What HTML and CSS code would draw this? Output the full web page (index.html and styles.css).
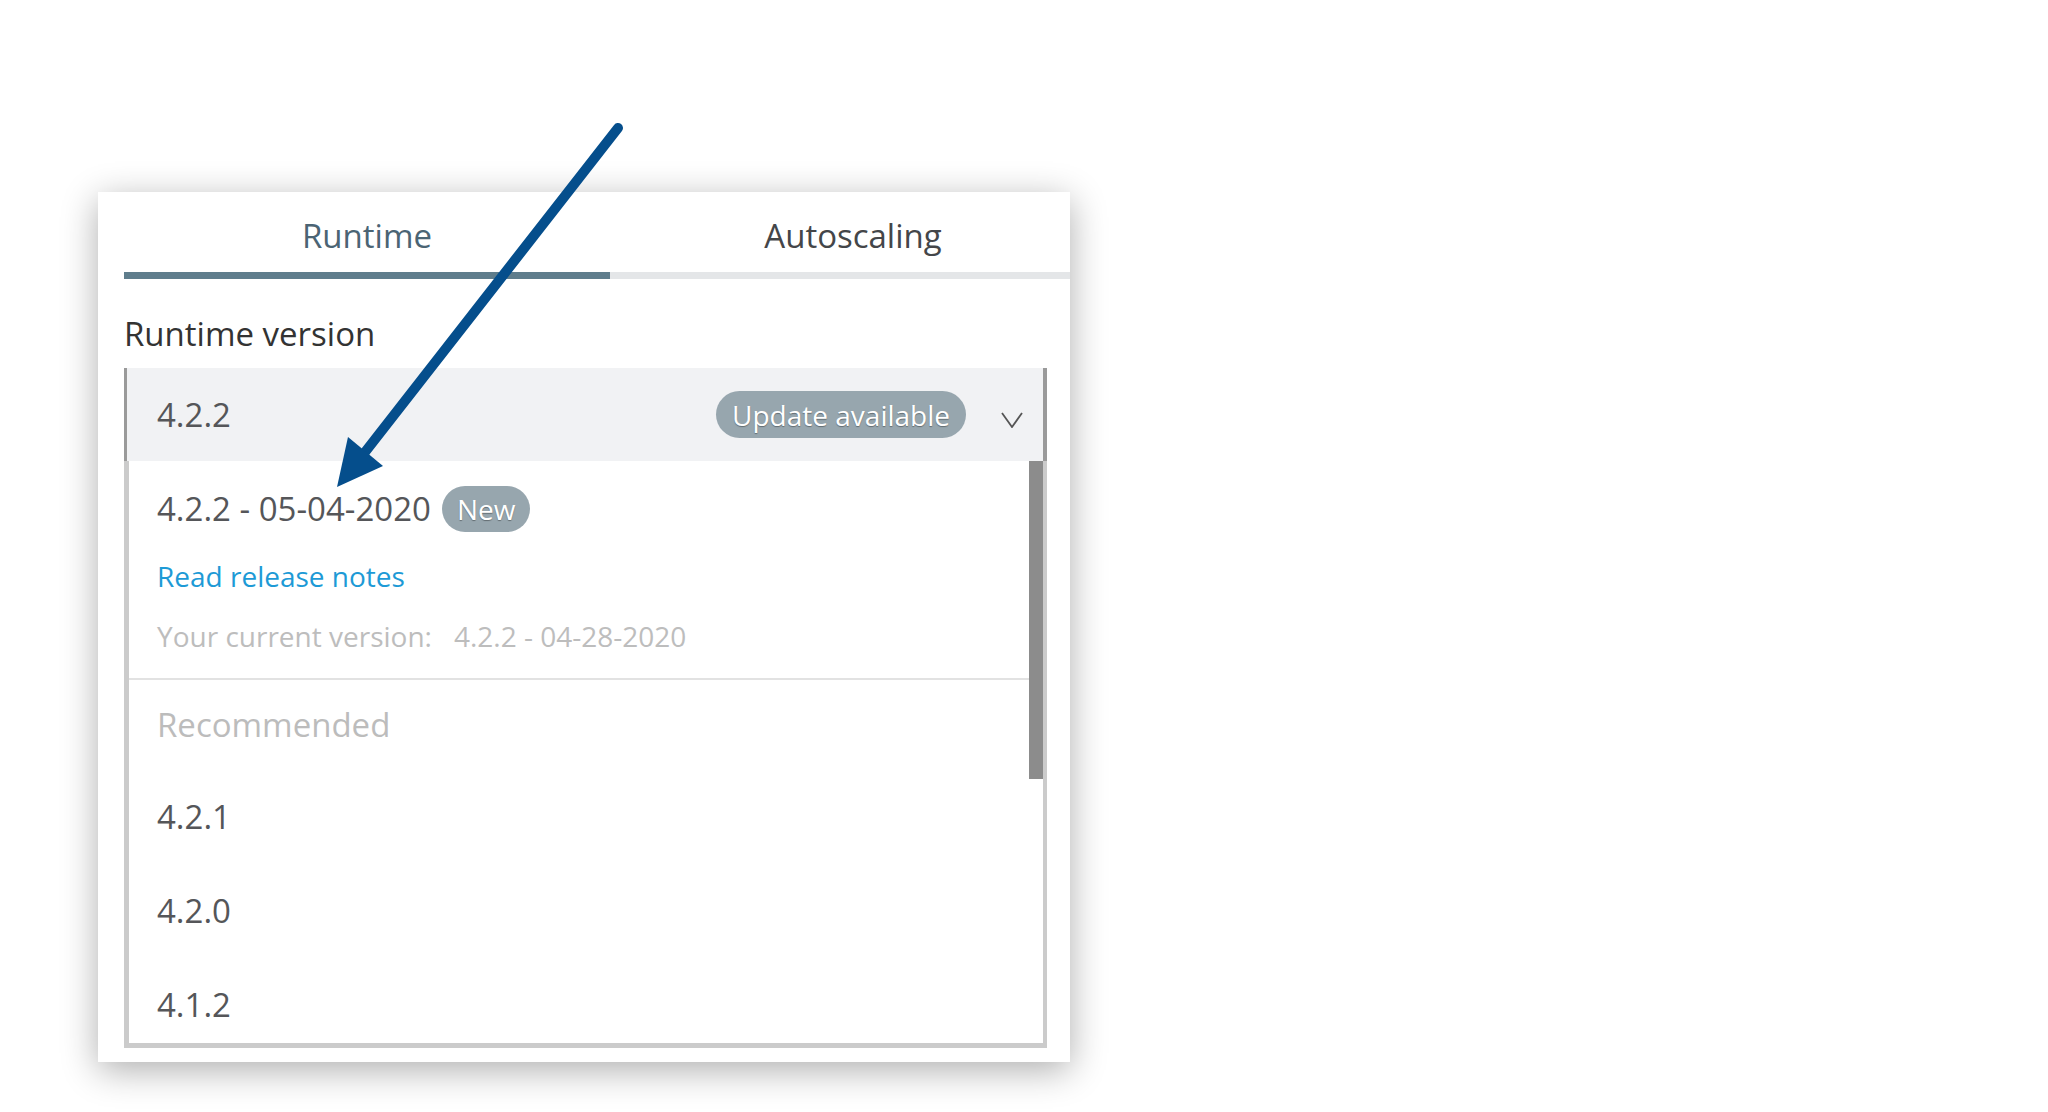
FILE: index.html
```html
<!DOCTYPE html>
<html>
<head>
<meta charset="utf-8">
<link rel="stylesheet" href="styles.css">
</head>
<body>
<div class="card">
  <div class="tabs">
    <div class="tab tab-active">Runtime</div>
    <div class="tab">Autoscaling</div>
  </div>
  <div class="field-label">Runtime version</div>
  <div class="select">
    <span class="select-value">4.2.2</span>
    <span class="pill pill-update">Update available</span>
    <svg class="chevron" width="22" height="16" viewBox="0 0 22 16"><path d="M1 1 L11 15 L21 1" fill="none" stroke="#555" stroke-width="1.8"/></svg>
  </div>
  <div class="list">
    <div class="list-head">
      <div class="new-row"><span>4.2.2 - 05-04-2020</span><span class="pill pill-new">New</span></div>
      <div class="link">Read release notes</div>
      <div class="current">Your current version:<span class="current-val">4.2.2 - 04-28-2020</span></div>
    </div>
    <div class="group-title">Recommended</div>
    <div class="item">4.2.1</div>
    <div class="item">4.2.0</div>
    <div class="item">4.1.2</div>
    <div class="thumb"></div>
  </div>
</div>
<svg class="arrow" width="2048" height="1112" viewBox="0 0 2048 1112">
  <line x1="618" y1="128" x2="362" y2="456" stroke="#054e8c" stroke-width="10" stroke-linecap="round"/>
  <polygon points="337,487 383,466 348,437" fill="#054e8c"/>
</svg>
</body>
</html>
```
FILE: styles.css
```css
html, body {
  margin: 0;
  padding: 0;
  background: #ffffff;
}
body {
  font-family: "Open Sans", "DejaVu Sans", sans-serif;
  width: 2048px;
  height: 1112px;
  overflow: hidden;
  position: relative;
  padding-top: 192px;
  box-sizing: border-box;
}
.card {
  margin-left: 98px;
  width: 972px;
  height: 870px;
  background: #ffffff;
  box-shadow: 0 8px 34px rgba(0, 0, 0, 0.32);
  box-sizing: border-box;
  padding: 0 23px 0 26px;
  overflow: hidden;
}
.tabs {
  display: flex;
  width: 972px;
}
.tab {
  width: 486px;
  flex: none;
  text-align: center;
  font-size: 33px;
  line-height: 44px;
  padding: 22px 0 14px;
  color: #444649;
  border-bottom: 7px solid #e4e6e8;
}
.tab-active {
  color: #4b6474;
  border-bottom-color: #5f7d8c;
}
.field-label {
  margin-top: 33px;
  font-size: 33px;
  line-height: 44px;
  color: #333333;
}
.select {
  margin-top: 12px;
  height: 93px;
  box-sizing: border-box;
  background: #f1f2f4;
  border-left: 3px solid #9a9a9a;
  border-right: 4px solid #9a9a9a;
  display: flex;
  align-items: center;
  padding: 0 20px 0 30px;
}
.select-value {
  flex: 1;
  font-size: 33px;
  line-height: 44px;
  color: #555659;
}
.pill {
  display: inline-flex;
  align-items: center;
  background: #97a6ae;
  color: #ffffff;
  font-size: 28px;
  border-radius: 24px;
  text-shadow: 0 1px 1px rgba(0, 0, 0, 0.35);
}
.pill-update {
  height: 47px;
  padding: 0 16px;
  margin-right: 35px;
}
.chevron {
  margin-top: 10px;
}
.list {
  position: relative;
  height: 587px;
  box-sizing: border-box;
  border: 5px solid #cbcbcb;
  border-top: none;
  border-right-width: 4px;
  overflow: hidden;
  padding-right: 14px;
}
.thumb {
  position: absolute;
  right: 0;
  top: 0;
  width: 14px;
  height: 318px;
  background: #8c8c8c;
}
.list-head {
  padding: 25px 0 22px 28px;
  border-bottom: 2px solid #e2e2e2;
}
.new-row {
  display: flex;
  align-items: center;
  height: 46px;
  font-size: 33px;
  line-height: 44px;
  color: #555659;
}
.pill-new {
  height: 46px;
  padding: 0 15px;
  margin-left: 11px;
}
.link {
  margin-top: 24px;
  font-size: 28px;
  line-height: 40px;
  color: #1d9ad6;
}
.current {
  margin-top: 20px;
  font-size: 28px;
  line-height: 40px;
  color: #bdbdbd;
}
.current-val {
  margin-left: 22px;
}
.group-title {
  padding: 23px 0 23px 28px;
  font-size: 33px;
  line-height: 44px;
  color: #bcbcbc;
}
.item {
  padding: 25px 0 25px 28px;
  font-size: 33px;
  line-height: 44px;
  color: #555659;
}
.arrow {
  position: absolute;
  left: 0;
  top: 0;
  pointer-events: none;
}
```
